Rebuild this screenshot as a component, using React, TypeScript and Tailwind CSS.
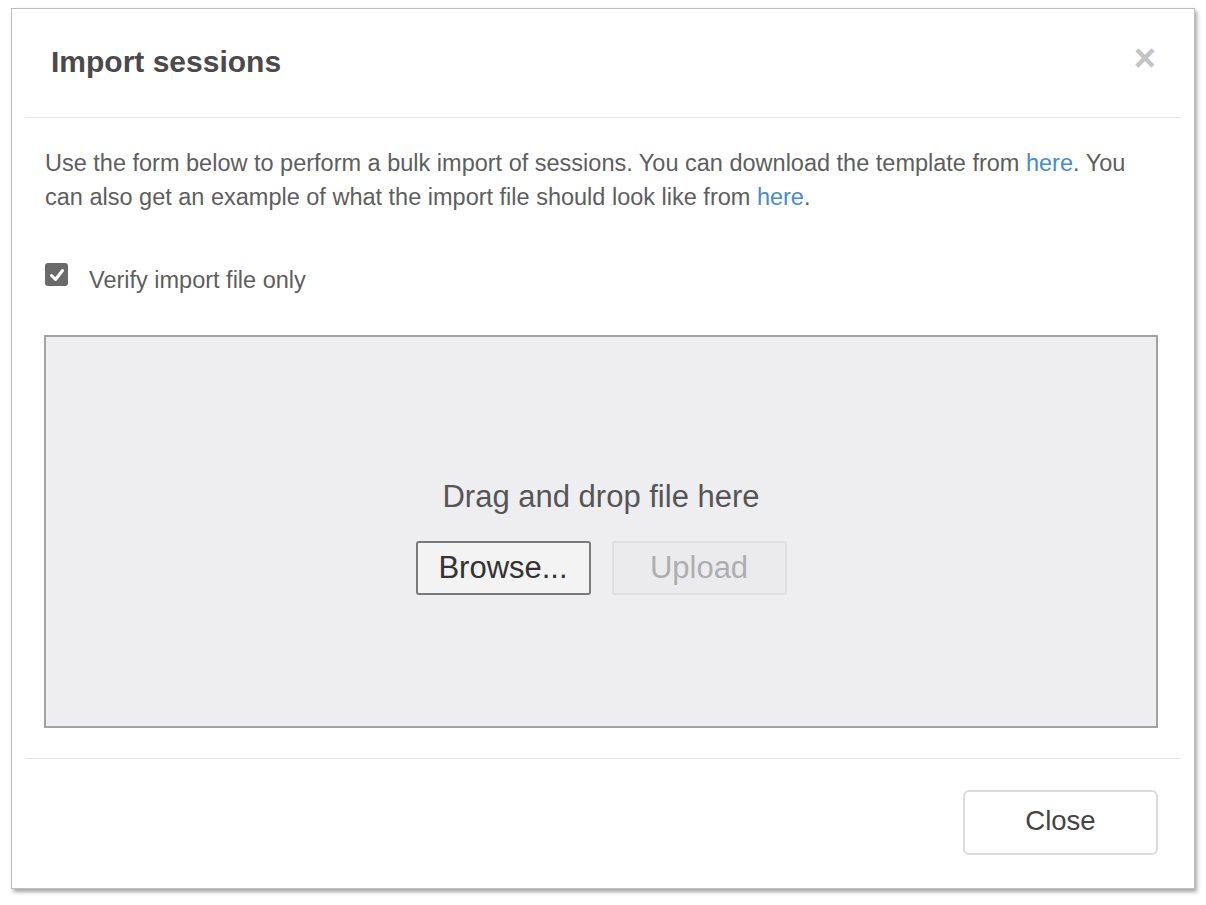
import React from "react";

export default function App() {
  return (
    <div
      className="w-[1206px] h-[905px] bg-white pt-[8px] pl-[11px]"
      style={{ fontFamily: '"Liberation Sans", Arial, sans-serif' }}
    >
      <div className="w-[1184px] h-[881px] bg-white border border-[#bdbdbd] shadow-[2px_3px_4px_rgba(0,0,0,0.35)] flex flex-col px-[13px]">
        {/* header */}
        <div className="h-[109px] shrink-0 border-b border-[#e5e5e5] flex items-center justify-between pl-[26px] pr-[25px]">
          <h1 className="text-[30px] leading-[36px] font-bold text-[#4a4a4a] -mt-[2px]">Import sessions</h1>
          <span className="text-[38px] leading-[30px] font-bold text-[#c4c4c4] -mt-[10px]">×</span>
        </div>
        {/* body */}
        <div className="pt-[28px] px-[19px] flex flex-col">
          <p className="text-[23.5px] leading-[34px] text-[#5e5e5e] pl-[1px]">
            Use the form below to perform a bulk import of sessions. You can download the template from{" "}
            <a className="text-[#4a8cc6]">here</a>. You
            <br />
            can also get an example of what the import file should look like from{" "}
            <a className="text-[#4a8cc6]">here</a>.
          </p>
          <div className="mt-[49px] flex items-start pl-[1px]">
            <div className="w-[23px] h-[23px] rounded-[3px] bg-[#6a6a6a] flex items-center justify-center">
              <svg width="18" height="18" viewBox="0 0 18 18">
                <path d="M3.5 9.5 L7.5 13.5 L14.5 4.5" fill="none" stroke="white" strokeWidth="3" strokeLinecap="round" strokeLinejoin="round" />
              </svg>
            </div>
            <span className="ml-[21px] mt-[3px] text-[23.5px] leading-[28px] text-[#5e5e5e]">Verify import file only</span>
          </div>
          <div className="mt-[41px] w-[1114px] h-[393px] border-2 border-[#a3a3a3] bg-[#eeeef1] flex flex-col items-center pt-[143px]">
            <div className="text-[31px] leading-[34px] text-[#555]">Drag and drop file here</div>
            <div className="mt-[27px] flex gap-[21px]">
              <button className="w-[175px] h-[54px] rounded-[3px] border-2 border-[#7a7a7a] bg-[#f3f3f3] text-[31px] text-[#333]">
                Browse...
              </button>
              <button className="w-[175px] h-[54px] rounded-[3px] border-2 border-[#e0e0e0] bg-[#ebebed] text-[31px] text-[#aeaeae]">
                Upload
              </button>
            </div>
          </div>
        </div>
        {/* footer */}
        <div className="mt-[30px] border-t border-[#e5e5e5] flex justify-end pt-[31px] pr-[23px]">
          <button className="w-[195px] h-[65px] rounded-[6px] border-2 border-[#dcdcdc] bg-white text-[27.5px] leading-[32px] pb-[3px] text-[#444]">
            Close
          </button>
        </div>
      </div>
    </div>
  );
}
